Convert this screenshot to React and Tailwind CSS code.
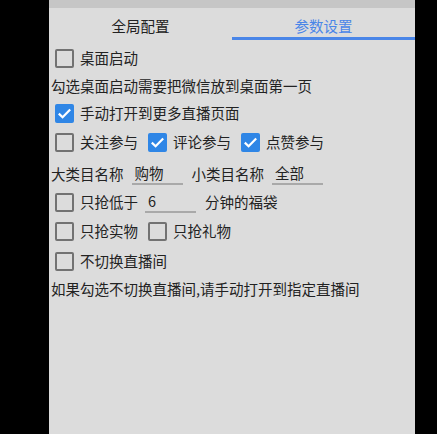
import React, { useState } from 'react'

const font = { fontFamily: '"Noto Sans CJK SC", "Noto Sans", sans-serif' }

const Box = ({ checked, onClick }) => (
  <button
    onClick={onClick}
    className={`size-[19px] shrink-0 rounded-[2px] flex items-center justify-center ${checked ? 'bg-[#2f86e6]' : 'border-[2.5px] border-[#727272]'}`}
  >
    {checked && (
      <svg viewBox="0 0 19 19" className="size-[19px]">
        <path d="M3.8 9.6 L7.6 13.3 L15.2 5.6" fill="none" stroke="white" strokeWidth="2.2" />
      </svg>
    )}
  </button>
)

const Check = ({ label, checked, onClick }) => (
  <div className="flex items-center gap-[6px]">
    <Box checked={checked} onClick={onClick} />
    <span>{label}</span>
  </div>
)

const Field = ({ value }) => (
  <div className="w-[51px] h-[22px] border-b-2 border-[#a9a9a9] pl-[3px] leading-[20px]">{value}</div>
)

const App = () => {
  const [tab, setTab] = useState(1)
  const [c, setC] = useState({ desk: false, more: true, follow: false, comment: true, like: true, low: false, real: false, gift: false, stay: false })
  const t = (k) => () => setC({ ...c, [k]: !c[k] })

  return (
    <div className="w-[437px] h-[434px] bg-black flex" style={font}>
      <div className="ml-[49px] w-[366px] h-full bg-[#dcdcdc] flex flex-col text-[14.5px] text-[#222]">
        <div className="h-[8px] bg-[#c6c6c6]" />
        <div className="flex h-[32px]">
          {['全局配置', '参数设置'].map((name, i) => (
            <button
              key={name}
              onClick={() => setTab(i)}
              className={`flex-1 flex flex-col items-center justify-end ${tab === i ? 'text-[#4a86e8]' : 'text-[#222]'}`}
            >
              <span className="mb-[1px] leading-[20px]">{name}</span>
              <div className={`h-[3px] w-full ${tab === i ? 'bg-[#4a86e8]' : ''}`} />
            </button>
          ))}
        </div>

        <div className="flex flex-col pl-[6px] pt-[4px] leading-[20px]">
          <div className="h-[28px] flex items-center"><Check label="桌面启动" checked={c.desk} onClick={t('desk')} /></div>
          <div className="h-[28px] flex items-center -ml-[4px]">勾选桌面启动需要把微信放到桌面第一页</div>
          <div className="h-[26px] flex items-center"><Check label="手动打开到更多直播页面" checked={c.more} onClick={t('more')} /></div>
          <div className="h-[32px] flex items-center gap-[10px]">
            <Check label="关注参与" checked={c.follow} onClick={t('follow')} />
            <Check label="评论参与" checked={c.comment} onClick={t('comment')} />
            <Check label="点赞参与" checked={c.like} onClick={t('like')} />
          </div>
          <div className="h-[30px] flex items-center -ml-[4px] pt-[2px]">
            <span>大类目名称</span>
            <div className="ml-[8px]"><Field value="购物" /></div>
            <span className="ml-[9px]">小类目名称</span>
            <div className="ml-[8px]"><Field value="全部" /></div>
          </div>
          <div className="h-[28px] flex items-center">
            <Check label="只抢低于" checked={c.low} onClick={t('low')} />
            <div className="ml-[7px]"><Field value="6" /></div>
            <span className="ml-[9px]">分钟的福袋</span>
          </div>
          <div className="h-[30px] flex items-center gap-[10px]">
            <Check label="只抢实物" checked={c.real} onClick={t('real')} />
            <Check label="只抢礼物" checked={c.gift} onClick={t('gift')} />
          </div>
          <div className="h-[30px] flex items-center"><Check label="不切换直播间" checked={c.stay} onClick={t('stay')} /></div>
          <div className="h-[26px] flex items-center -ml-[4px]">如果勾选不切换直播间,请手动打开到指定直播间</div>
        </div>
      </div>
    </div>
  )
}

export default App
